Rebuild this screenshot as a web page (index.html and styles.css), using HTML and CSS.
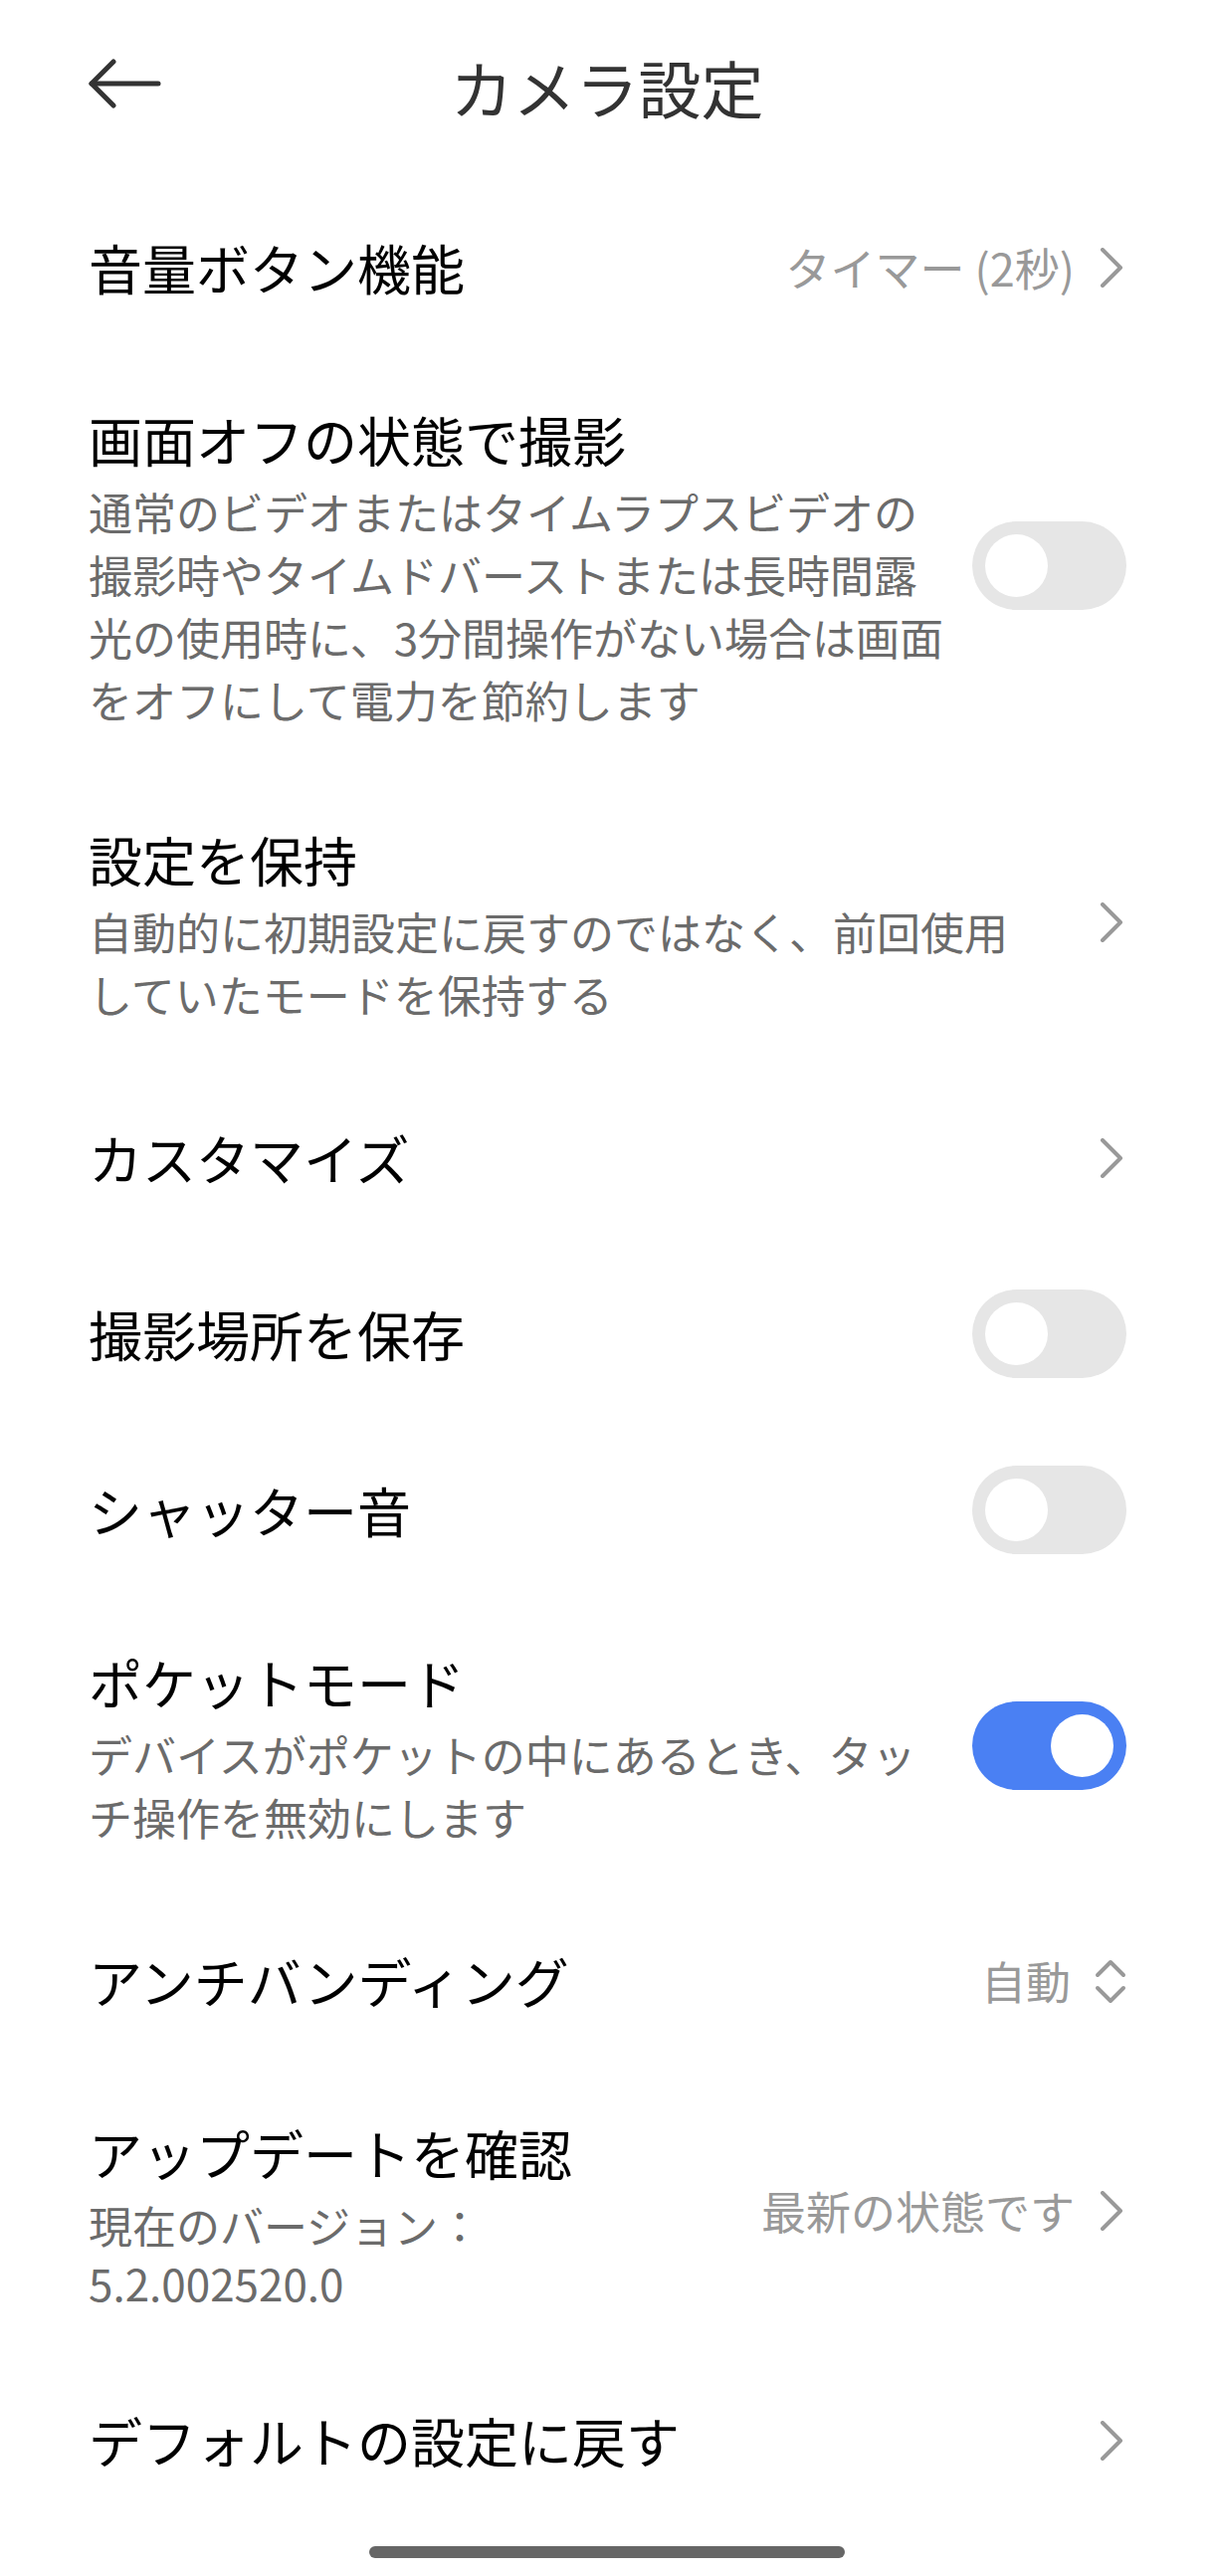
FILE: index.html
```html
<!DOCTYPE html>
<html lang="ja">
  <head>
    <meta charset="utf-8">
    <title>カメラ設定</title>
    <link rel="stylesheet" href="styles.css">
  </head>
  <body>
    <header class="top-bar">
      <button type="button" class="back-button" aria-label="戻る">
        <svg width="74" height="50" viewBox="0 0 74 50">
          <polyline points="26,3 4,25 26,47" fill="none" stroke="#333" stroke-width="5" stroke-linecap="round" stroke-linejoin="round" />
          <line x1="4" y1="25" x2="71" y2="25" stroke="#333" stroke-width="5" stroke-linecap="round" />
        </svg>
      </button>
      <h1 class="page-title">カメラ設定</h1>
    </header>

    <ul class="settings-list">
      <li class="setting-row">
        <div class="setting-text">
          <div class="setting-label">音量ボタン機能</div>
        </div>
        <div class="setting-aside">
          <span class="setting-value">タイマー (2秒)</span>
          <svg class="chevron" width="28" height="40" viewBox="0 0 28 40">
            <polyline points="4,2 22,20 4,38" fill="none" stroke="#999" stroke-width="4" stroke-linecap="round" stroke-linejoin="round" />
          </svg>
        </div>
      </li>

      <li class="setting-row">
        <div class="setting-text">
          <div class="setting-label">画面オフの状態で撮影</div>
          <div class="setting-desc">通常のビデオまたはタイムラプスビデオの<br>撮影時やタイムドバーストまたは長時間露<br>光の使用時に、3分間操作がない場合は画面<br>をオフにして電力を節約します</div>
        </div>
        <div class="setting-aside">
          <span class="switch"></span>
        </div>
      </li>

      <li class="setting-row">
        <div class="setting-text">
          <div class="setting-label">設定を保持</div>
          <div class="setting-desc">自動的に初期設定に戻すのではなく、前回使用<br>していたモードを保持する</div>
        </div>
        <div class="setting-aside">
          <svg class="chevron" width="28" height="40" viewBox="0 0 28 40">
            <polyline points="4,2 22,20 4,38" fill="none" stroke="#999" stroke-width="4" stroke-linecap="round" stroke-linejoin="round" />
          </svg>
        </div>
      </li>

      <li class="setting-row">
        <div class="setting-text">
          <div class="setting-label">カスタマイズ</div>
        </div>
        <div class="setting-aside">
          <svg class="chevron" width="28" height="40" viewBox="0 0 28 40">
            <polyline points="4,2 22,20 4,38" fill="none" stroke="#999" stroke-width="4" stroke-linecap="round" stroke-linejoin="round" />
          </svg>
        </div>
      </li>

      <li class="setting-row">
        <div class="setting-text">
          <div class="setting-label">撮影場所を保存</div>
        </div>
        <div class="setting-aside">
          <span class="switch"></span>
        </div>
      </li>

      <li class="setting-row">
        <div class="setting-text">
          <div class="setting-label">シャッター音</div>
        </div>
        <div class="setting-aside">
          <span class="switch"></span>
        </div>
      </li>

      <li class="setting-row">
        <div class="setting-text">
          <div class="setting-label">ポケットモード</div>
          <div class="setting-desc">デバイスがポケットの中にあるとき、タッ<br>チ操作を無効にします</div>
        </div>
        <div class="setting-aside">
          <span class="switch switch-on"></span>
        </div>
      </li>

      <li class="setting-row">
        <div class="setting-text">
          <div class="setting-label">アンチバンディング</div>
        </div>
        <div class="setting-aside">
          <span class="setting-value">自動</span>
          <svg class="updown" width="32" height="48" viewBox="0 0 32 48">
            <polyline points="3,18 16,5 29,18" fill="none" stroke="#999" stroke-width="4" stroke-linecap="round" stroke-linejoin="round" />
            <polyline points="3,31 16,44 29,31" fill="none" stroke="#999" stroke-width="4" stroke-linecap="round" stroke-linejoin="round" />
          </svg>
        </div>
      </li>

      <li class="setting-row">
        <div class="setting-text">
          <div class="setting-label">アップデートを確認</div>
          <div class="setting-desc">現在のバージョン：</div>
          <div class="setting-desc version">5.2.002520.0</div>
        </div>
        <div class="setting-aside">
          <span class="setting-value">最新の状態です</span>
          <svg class="chevron" width="28" height="40" viewBox="0 0 28 40">
            <polyline points="4,2 22,20 4,38" fill="none" stroke="#999" stroke-width="4" stroke-linecap="round" stroke-linejoin="round" />
          </svg>
        </div>
      </li>

      <li class="setting-row">
        <div class="setting-text">
          <div class="setting-label">デフォルトの設定に戻す</div>
        </div>
        <div class="setting-aside">
          <svg class="chevron" width="28" height="40" viewBox="0 0 28 40">
            <polyline points="4,2 22,20 4,38" fill="none" stroke="#999" stroke-width="4" stroke-linecap="round" stroke-linejoin="round" />
          </svg>
        </div>
      </li>
    </ul>

    <div class="home-bar"></div>
  </body>
</html>
```

FILE: styles.css
```css
* {
  box-sizing: border-box;
}

body {
  margin: 0;
  background: #fff;
  font-family: "Noto Sans CJK JP", "Noto Sans", sans-serif;
  color: #000;
}

/* header */
.top-bar {
  height: 180px;
  display: grid;
  grid-template-columns: 1fr auto 1fr;
  align-items: center;
}

.back-button {
  justify-self: start;
  margin-left: 88px;
  margin-bottom: 12px;
  padding: 0;
  border: 0;
  background: none;
  display: flex;
}

.page-title {
  margin: 0 0 8px;
  font-size: 63px;
  font-weight: 400;
  line-height: 1;
  color: #333;
}

/* list */
.settings-list {
  list-style: none;
  margin: 0;
  padding: 0;
}

.setting-row {
  display: flex;
  align-items: center;
  gap: 24px;
  min-height: 177px;
  padding: 44px 88px 44px 89px;
}

.setting-text {
  flex: 1;
  min-width: 0;
}

.setting-label {
  font-size: 54px;
  line-height: 82px;
}

.setting-desc {
  font-size: 44px;
  line-height: 63px;
  color: #6b6b6b;
  white-space: nowrap;
}

.setting-desc.version {
  line-height: 52px;
}

.setting-aside {
  display: flex;
  align-items: center;
  gap: 24px;
  flex-shrink: 0;
}

.setting-value {
  font-size: 45px;
  color: #999;
  white-space: nowrap;
}

.chevron,
.updown {
  display: block;
}

/* toggle switch */
.switch {
  position: relative;
  display: block;
  width: 155px;
  height: 89px;
  border-radius: 45px;
  background: #e6e6e6;
}

.switch::after {
  content: "";
  position: absolute;
  top: 13px;
  left: 13px;
  width: 63px;
  height: 63px;
  border-radius: 50%;
  background: #fff;
}

.switch-on {
  background: #4a80f3;
}

.switch-on::after {
  left: 79px;
}

.home-bar {
  width: 478px;
  height: 12px;
  margin: 18px auto 0;
  border-radius: 6px;
  background: #666;
}
```
